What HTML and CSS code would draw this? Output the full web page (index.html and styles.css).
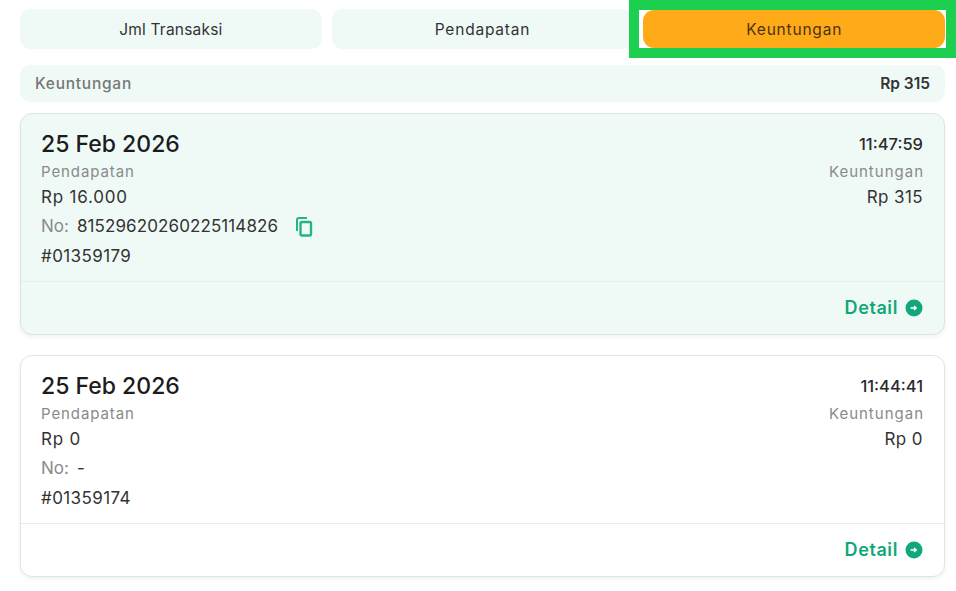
FILE: index.html
```html
<!DOCTYPE html>
<html lang="id">
<head>
<meta charset="utf-8">
<title>Keuntungan</title>
<link rel="stylesheet" href="styles.css">
</head>
<body>
<main class="page">
  <nav class="tabs">
    <button class="tab tab-narrow">Jml Transaksi</button>
    <button class="tab">Pendapatan</button>
    <button class="tab tab-active">Keuntungan</button>
  </nav>
  <div class="summary"><span class="summary-label">Keuntungan</span><span class="summary-value">Rp 315</span></div>
  <article class="card card-active">
    <div class="card-body">
      <div class="row"><span class="date">25 Feb 2026</span><span class="time">11:47:59</span></div>
      <div class="row row-label"><span class="label">Pendapatan</span><span class="label label-end">Keuntungan</span></div>
      <div class="row row-amount"><span class="amount">Rp 16.000</span><span class="amount amount-end">Rp 315</span></div>
      <div class="line line-no"><span class="label-no">No:</span> <span class="number">81529620260225114826</span>
        <svg class="copy" viewBox="0 0 18 20" width="18" height="20" aria-hidden="true"><path d="M2 14V3a2 2 0 0 1 2-2h8" fill="none" stroke="#25b48a" stroke-width="2"/><rect x="5.5" y="5" width="10.5" height="13.5" rx="1.5" fill="none" stroke="#25b48a" stroke-width="2.4"/></svg>
      </div>
      <div class="line line-id">#01359179</div>
    </div>
    <div class="card-foot"><span class="detail">Detail</span>
      <svg class="go" viewBox="0 0 18 18" width="18" height="18" aria-hidden="true"><circle cx="9" cy="9" r="8.5" fill="#12a77a"/><path d="M5.5 9h5.5M9 7l2.2 2L9 11" fill="none" stroke="#fff" stroke-width="1.4"/></svg>
    </div>
  </article>
  <article class="card">
    <div class="card-body">
      <div class="row"><span class="date">25 Feb 2026</span><span class="time">11:44:41</span></div>
      <div class="row row-label"><span class="label">Pendapatan</span><span class="label label-end">Keuntungan</span></div>
      <div class="row row-amount"><span class="amount">Rp 0</span><span class="amount amount-end">Rp 0</span></div>
      <div class="line line-no"><span class="label-no">No:</span> <span class="number">-</span></div>
      <div class="line line-id">#01359174</div>
    </div>
    <div class="card-foot"><span class="detail">Detail</span>
      <svg class="go" viewBox="0 0 18 18" width="18" height="18" aria-hidden="true"><circle cx="9" cy="9" r="8.5" fill="#12a77a"/><path d="M5.5 9h5.5M9 7l2.2 2L9 11" fill="none" stroke="#fff" stroke-width="1.4"/></svg>
    </div>
  </article>
</main>
<div class="highlight"></div>
</body>
</html>
```
FILE: styles.css
```css
* { box-sizing: border-box; }
html, body { margin: 0; padding: 0; }
body {
  width: 956px; height: 591px; overflow: hidden; background: #fff;
  font-family: Inter, "Noto Sans", sans-serif; color: #2b2b2b; position: relative;
}
.page { padding: 9px 11px 0 20px; display: flex; flex-direction: column; }
.tabs { display: flex; gap: 10px; height: 40px; }
.tab {
  flex: 1; border: 0; border-radius: 11px; background: #effaf7; color: #333;
  font: 400 15.5px Inter, sans-serif; letter-spacing: .8px; padding: 0;
}
.tab-narrow { letter-spacing: .2px; }
.tab-active { background: #ffab19; margin: 1px 0; height: 38px; color: #4a3210; }
.summary {
  margin-top: 16px; height: 37px; border-radius: 10px; background: #effaf7;
  display: flex; justify-content: space-between; align-items: center; padding: 0 15px; font-size: 15.5px;
}
.summary-label { color: #777; font-weight: 500; letter-spacing: .75px; }
.summary-value { color: #333; font-weight: 600; font-size: 15.5px; }
.card {
  margin-top: 11px; height: 222px; border: 1px solid #e2e4e4; border-radius: 12px; background: #fff;
  box-shadow: 0 2px 4px rgba(0,0,0,.06); display: flex; flex-direction: column;
}
.card + .card { margin-top: 20px; }
.card-active { background: #effaf7; border-color: #dfe3e2; }
.card-body { height: 168px; border-bottom: 1px solid #e6eeeb; padding: 16px 21px 0 20px; }
.row { display: flex; justify-content: space-between; align-items: center; }
.date { font-size: 23px; font-weight: 500; color: #1c1c1c; line-height: 29px; }
.time { font-size: 16.5px; font-weight: 500; color: #2b2b2b; padding-bottom: 2px; }
.row-label { margin-top: 2px; height: 20px; }
.label { font-size: 15px; color: #8a8a8a; letter-spacing: .9px; }
.label-end { letter-spacing: 1px; margin-right: -1px; }
.row-amount { margin-top: 5px; height: 22px; }
.amount { font-size: 17px; color: #333; letter-spacing: .8px; }
.amount-end { letter-spacing: .4px; }
.line { display: flex; align-items: center; gap: 8px; }
.line-no { margin-top: 7px; height: 22px; }
.label-no { font-size: 17px; color: #8a8a8a; }
.number { font-size: 17px; color: #333; letter-spacing: .1px; }
.copy { margin: 2px 0 0 9px; }
.line-id { margin-top: 8px; height: 22px; font-size: 17px; color: #333; letter-spacing: .4px; }
.card-foot { flex: 1; display: flex; justify-content: flex-end; align-items: center; gap: 7px; padding: 0 21px 1px 0; }
.detail { font-size: 18px; font-weight: 600; color: #12a77a; letter-spacing: .6px; }
.highlight {
  position: absolute; left: 629px; top: 0; width: 327px; height: 58px; border: 10px solid #1dcf4f;
}
```
